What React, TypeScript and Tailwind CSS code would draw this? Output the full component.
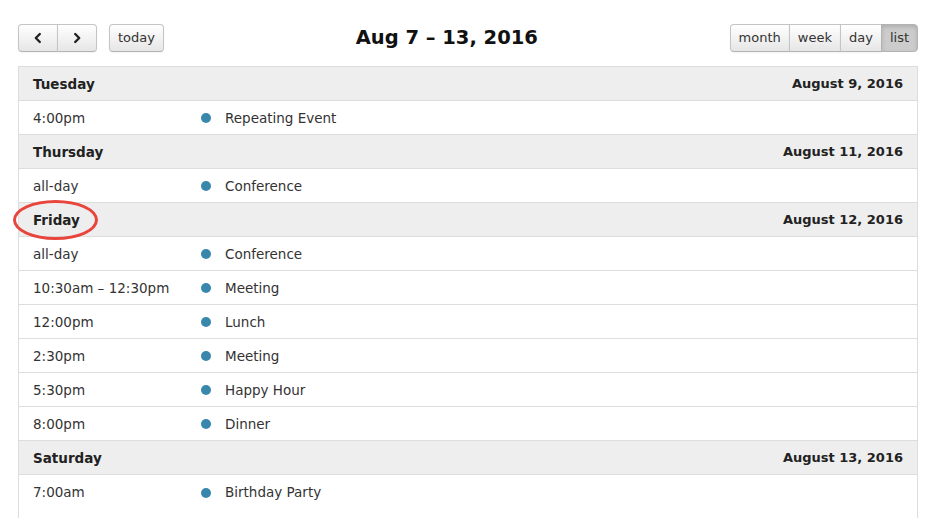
import React from 'react';

type Item = { time: string; title: string };
type Day = { name: string; date: string; items: Item[] };

const DAYS: Day[] = [
  { name: 'Tuesday', date: 'August 9, 2016', items: [{ time: '4:00pm', title: 'Repeating Event' }] },
  { name: 'Thursday', date: 'August 11, 2016', items: [{ time: 'all-day', title: 'Conference' }] },
  {
    name: 'Friday',
    date: 'August 12, 2016',
    items: [
      { time: 'all-day', title: 'Conference' },
      { time: '10:30am – 12:30pm', title: 'Meeting' },
      { time: '12:00pm', title: 'Lunch' },
      { time: '2:30pm', title: 'Meeting' },
      { time: '5:30pm', title: 'Happy Hour' },
      { time: '8:00pm', title: 'Dinner' },
    ],
  },
  { name: 'Saturday', date: 'August 13, 2016', items: [{ time: '7:00am', title: 'Birthday Party' }] },
];

const BTN =
  'h-[28px] px-[8px] flex items-center justify-center text-[13px] text-[#333] border border-[#c4c4c4] border-b-[#b3b3b3] bg-gradient-to-b from-white to-[#e6e6e6] shadow-[inset_0_1px_0_rgba(255,255,255,0.2),0_1px_2px_rgba(0,0,0,0.05)]';

function Chevron({ dir }: { dir: 'l' | 'r' }) {
  return (
    <svg width="10" height="12" viewBox="0 0 10 12" fill="none">
      <path
        d={dir === 'l' ? 'M6.8 2 L2.8 6 L6.8 10' : 'M3.2 2 L7.2 6 L3.2 10'}
        stroke="#222"
        strokeWidth="2.4"
        strokeLinecap="round"
        strokeLinejoin="round"
      />
    </svg>
  );
}

export default function App() {
  const last = DAYS.length - 1;
  return (
    <div className="w-[936px] h-[518px] bg-white overflow-hidden text-[#333]" style={{ fontFamily: '"DejaVu Sans", Verdana, sans-serif' }}>
      <div className="px-[18px] pt-[24px]">
        {/* Toolbar */}
        <div className="flex items-center h-[28px] mb-[14px]">
          <div className="flex items-center gap-[12px]">
            <div className="flex">
              <button className={`${BTN} w-[40px] rounded-l-[4px]`}><Chevron dir="l" /></button>
              <button className={`${BTN} w-[40px] rounded-r-[4px] -ml-px`}><Chevron dir="r" /></button>
            </div>
            <button className={`${BTN} rounded-[4px]`}>today</button>
          </div>
          <h2 className="flex-1 text-center text-[19.5px] font-bold text-[#111]">Aug 7 – 13, 2016</h2>
          <div className="flex">
            <button className={`${BTN} rounded-l-[4px]`}>month</button>
            <button className={`${BTN} -ml-px`}>week</button>
            <button className={`${BTN} -ml-px`}>day</button>
            <button className="h-[28px] px-[8px] flex items-center text-[13px] text-[#333] -ml-px rounded-r-[4px] border border-[#b3b3b3] bg-[#cccccc] shadow-[inset_0_2px_4px_rgba(0,0,0,0.15)]">list</button>
          </div>
        </div>

        {/* List */}
        <div className="h-[452px] border-l border-r border-t border-[#ddd] text-[13.5px]">
          {DAYS.map((d, di) => (
            <div key={d.name}>
              <div className="relative h-[34px] pt-px flex items-center justify-between px-[14px] bg-[#eeeeee] border-b border-[#ddd] font-bold text-[#222]">
                <span>{d.name}</span>
                <span className="text-[13px]">{d.date}</span>
                {d.name === 'Friday' && (
                  <div className="absolute left-[-6px] top-[-3px] w-[85px] h-[40px] rounded-[50%] border-[3px] border-[#e8453c]" />
                )}
              </div>
              {d.items.map((it, i) => (
                <div
                  key={i}
                  className={`h-[34px] pt-px flex items-center ${di === last && i === d.items.length - 1 ? '' : 'border-b border-[#ddd]'}`}
                >
                  <div className="w-[168px] pl-[14px]">{it.time}</div>
                  <div className="w-[38px] flex justify-center">
                    <span className="block w-[10px] h-[10px] rounded-full bg-[#3a87ad]" />
                  </div>
                  <div>{it.title}</div>
                </div>
              ))}
            </div>
          ))}
        </div>
      </div>
    </div>
  );
}
